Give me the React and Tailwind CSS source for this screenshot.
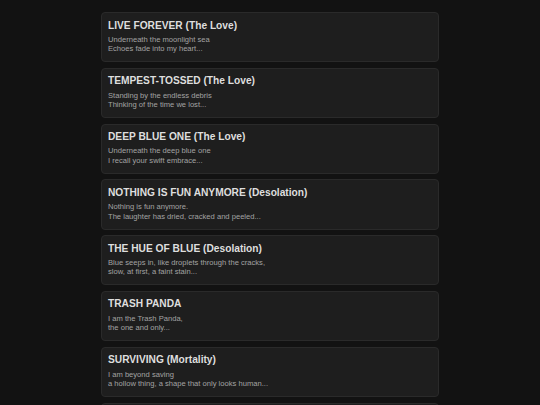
const poems = [
  {
    title: "LIVE FOREVER (The Love)",
    lines: ["Underneath the moonlight sea", "Echoes fade into my heart..."],
  },
  {
    title: "TEMPEST-TOSSED (The Love)",
    lines: ["Standing by the endless debris", "Thinking of the time we lost..."],
  },
  {
    title: "DEEP BLUE ONE (The Love)",
    lines: ["Underneath the deep blue one", "I recall your swift embrace..."],
  },
  {
    title: "NOTHING IS FUN ANYMORE (Desolation)",
    lines: ["Nothing is fun anymore.", "The laughter has dried, cracked and peeled..."],
  },
  {
    title: "THE HUE OF BLUE (Desolation)",
    lines: ["Blue seeps in, like droplets through the cracks,", "slow, at first, a faint stain..."],
  },
  {
    title: "TRASH PANDA",
    lines: ["I am the Trash Panda,", "the one and only..."],
  },
  {
    title: "SURVIVING (Mortality)",
    lines: ["I am beyond saving", "a hollow thing, a shape that only looks human..."],
  },
  {
    title: "ECHOES (Mortality)",
    lines: ["The silence speaks", "in voices I once knew..."],
  },
];

export default function App() {
  return (
    <div className="min-h-screen bg-[#121212] pt-[12px] font-['Liberation_Sans',Arial,sans-serif]">
      <div className="mx-auto flex w-[338px] flex-col gap-[5.5px]">
        {poems.map((p, i) => (
          <div
            key={i}
            className="rounded-[4px] border border-[#2a2a2a] bg-[#1e1e1e] px-[6px] pt-[5.5px] pb-[7.7px]"
          >
            <h3 className="text-[10.2px] font-bold leading-[13px] text-[#dedede]">
              {p.title}
            </h3>
            <p className="mt-[3.3px] text-[7.6px] leading-[9.4px] text-[#a3a3a3]">
              {p.lines[0]}
              <br />
              {p.lines[1]}
            </p>
          </div>
        ))}
      </div>
    </div>
  );
}
